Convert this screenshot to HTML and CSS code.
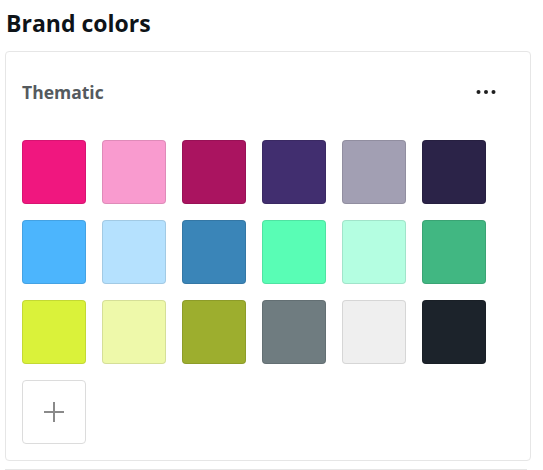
FILE: index.html
```html
<!DOCTYPE html>
<html>
<head>
<meta charset="utf-8">
<link rel="stylesheet" href="styles.css">
</head>
<body>
<h1 class="title">Brand colors</h1>
<section class="card">
  <div class="card-head">
    <h2 class="kit-name">Thematic</h2>
    <button class="more" aria-label="More">
      <svg width="20" height="6" viewBox="0 0 20 6"><circle cx="2.5" cy="3" r="2" fill="#1e1e1e"/><circle cx="10" cy="3" r="2" fill="#1e1e1e"/><circle cx="17.5" cy="3" r="2" fill="#1e1e1e"/></svg>
    </button>
  </div>
  <div class="swatches">
    <div class="swatch" style="background:#f0177f"></div>
    <div class="swatch" style="background:#f99bcf"></div>
    <div class="swatch" style="background:#aa1460"></div>
    <div class="swatch" style="background:#412e6f"></div>
    <div class="swatch" style="background:#a29fb3"></div>
    <div class="swatch" style="background:#2b2348"></div>
    <div class="swatch" style="background:#4cb5fd"></div>
    <div class="swatch" style="background:#b5e1fe"></div>
    <div class="swatch" style="background:#3a85b8"></div>
    <div class="swatch" style="background:#59fdb5"></div>
    <div class="swatch" style="background:#b4fee1"></div>
    <div class="swatch" style="background:#41b782"></div>
    <div class="swatch" style="background:#daf23a"></div>
    <div class="swatch" style="background:#eef9aa"></div>
    <div class="swatch" style="background:#9dae2e"></div>
    <div class="swatch" style="background:#6f7c80"></div>
    <div class="swatch" style="background:#efefef"></div>
    <div class="swatch" style="background:#1c232b"></div>
    <button class="add" aria-label="Add color">
      <svg width="22" height="22" viewBox="0 0 22 22"><path d="M11 1v20M1 11h20" stroke="#8a8a8a" stroke-width="2"/></svg>
    </button>
  </div>
</section>
<div class="next-card"></div>
</body>
</html>
```
FILE: styles.css
```css
* { box-sizing: border-box; }
html, body { margin: 0; padding: 0; background: #fff; }
body {
  font-family: "Open Sans", "Noto Sans", sans-serif;
  padding: 0 12px 0 5px;
  overflow: hidden;
  height: 470px;
}
.title {
  margin: 0;
  padding: 6px 0 0 1px;
  height: 51px;
  font-size: 23px;
  line-height: 34px;
  font-weight: 700;
  color: #0e1318;
}
.card {
  border: 1px solid #e6e6e6;
  border-radius: 4px;
  padding: 16px 16px 16px 16px;
  background: #fff;
}
.card-head {
  display: flex;
  align-items: center;
  justify-content: space-between;
  height: 48px;
  margin-bottom: 24px;
}
.kit-name {
  margin: 0;
  font-size: 17.5px;
  font-weight: 700;
  color: #555a5e;
  line-height: 50px;
}
.more {
  border: 0;
  background: none;
  padding: 0;
  margin-right: 18px;
  width: 20px;
  height: 24px;
  display: flex;
  align-items: center;
  justify-content: center;
  cursor: pointer;
}
.swatches {
  display: grid;
  grid-template-columns: repeat(6, 64px);
  grid-auto-rows: 64px;
  gap: 16px;
}
.swatch {
  border-radius: 4px;
  box-shadow: inset 0 0 0 1px rgba(0,0,0,0.1);
}
.add {
  border: 1px solid #dcdcdc;
  border-radius: 4px;
  background: #fff;
  padding: 0;
  display: flex;
  align-items: center;
  justify-content: center;
  cursor: pointer;
}
.next-card {
  margin-top: 8px;
  border-top: 1px solid #e6e6e6;
  margin-right: 4px;
  height: 4px;
}
```
